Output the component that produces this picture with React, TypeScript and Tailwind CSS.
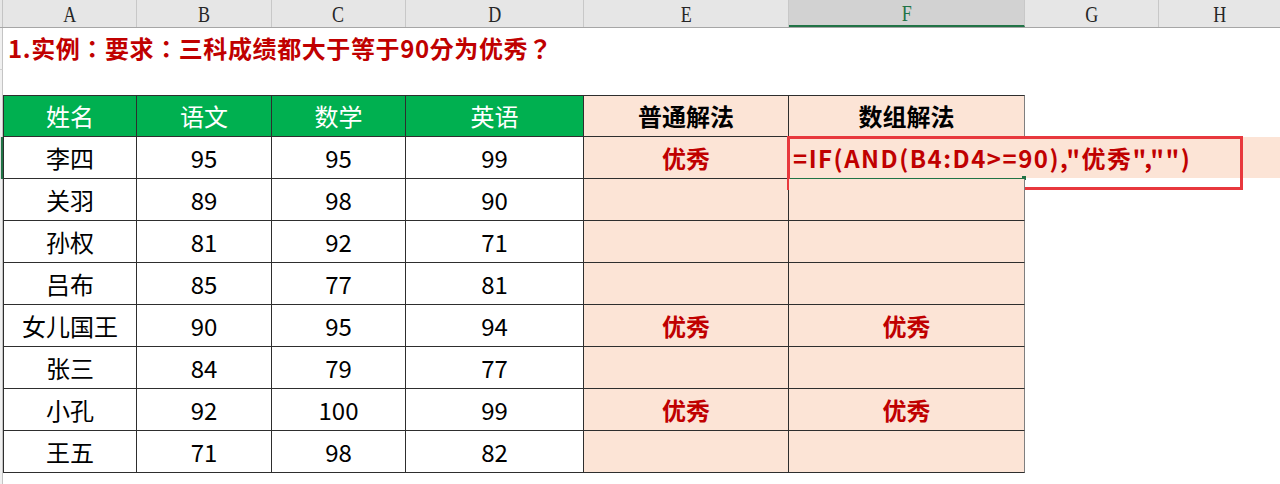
const rows = [
  ["李四", "95", "95", "99", "优秀", ""],
  ["关羽", "89", "98", "90", "", ""],
  ["孙权", "81", "92", "71", "", ""],
  ["吕布", "85", "77", "81", "", ""],
  ["女儿国王", "90", "95", "94", "优秀", "优秀"],
  ["张三", "84", "79", "77", "", ""],
  ["小孔", "92", "100", "99", "优秀", "优秀"],
  ["王五", "71", "98", "82", "", ""],
];

const widths = ["w-[134px]", "w-[135px]", "w-[134px]", "w-[178px]", "w-[205px]", "w-[236px]"];

function Strip({ active = false, className = "" }: { active?: boolean; className?: string }) {
  return (
    <div
      className={
        "w-[3px] shrink-0 self-stretch " +
        (active ? "border-r-2 border-[#217346] bg-[#e1e1e1]" : "border-r border-[#c4c4c4] bg-[#f0f0f0]") +
        " " +
        className
      }
    />
  );
}

function ColumnBar() {
  const letters = ["A", "B", "C", "D", "E", "F", "G"];
  return (
    <div className="flex h-[28px] border-b border-[#a6a6a6] bg-[#e6e6e6] font-['Liberation_Serif',serif] text-[24px] leading-none text-[#262626]">
      <div className="w-[3px] shrink-0 border-r border-[#c4c4c4]" />
      {letters.map((l, i) => (
        <div
          key={l}
          className={
            (i < 6 ? widths[i] : "w-[134px]") +
            " flex shrink-0 items-center justify-center border-r border-[#c8c8c8] " +
            (l === "F" ? "border-b-2 border-b-[#217346] bg-[#d2d2d2] text-[#217346]" : "")
          }
        >
          <span className="inline-block scale-x-[0.75]">{l}</span>
        </div>
      ))}
      <div className="flex flex-1 items-center justify-center">
        <span className="inline-block scale-x-[0.75]">H</span>
      </div>
    </div>
  );
}

export default function App() {
  return (
    <div className="h-[484px] w-[1280px] overflow-hidden bg-white font-['Noto_Sans_CJK_SC','Noto_Sans',sans-serif]">
      <ColumnBar />

      <div className="flex h-[42px]">
        <Strip className="border-b border-b-[#d0d0d0]" />
        <div className="flex items-center pl-[5px] pb-[2px] font-['Noto_Sans_CJK_TC','Noto_Sans_CJK_SC',sans-serif] text-[24px] font-bold tracking-[0.6px] text-[#c00000]">
          1.实例：要求：三科成绩都大于等于90分为优秀？
        </div>
      </div>
      <div className="flex h-[25px]">
        <Strip />
      </div>

      <div className="flex h-[42px]">
        <Strip />
        {["姓名", "语文", "数学", "英语"].map((h, i) => (
          <div
            key={h}
            className={
              widths[i] +
              " flex shrink-0 items-center justify-center border-t border-r border-b border-[#2e2e2e] bg-[#00b050] text-[24px] text-white " +
              (i === 0 ? "border-l" : "")
            }
          >
            {h}
          </div>
        ))}
        {["普通解法", "数组解法"].map((h, i) => (
          <div
            key={h}
            className={
              widths[i + 4] +
              " flex shrink-0 items-center justify-center border-t border-r border-b border-[#2e2e2e] bg-[#fce4d6] text-[24px] font-bold text-black " +
              (i === 1 ? "border-r-[#7f7f7f]" : "")
            }
          >
            {h}
          </div>
        ))}
      </div>

      {rows.map((r, ri) => (
        <div key={r[0]} className="flex h-[42px]">
          <Strip active={ri === 0} />
          {r.slice(0, 4).map((v, ci) => (
            <div
              key={ci}
              className={
                widths[ci] +
                " flex shrink-0 items-center justify-center border-r border-b border-[#2e2e2e] text-[24px] text-black " +
                (ci === 0 ? "border-l" : "")
              }
            >
              {v}
            </div>
          ))}
          <div className={widths[4] + " flex shrink-0 items-center justify-center border-r border-b border-[#2e2e2e] bg-[#fce4d6] text-[24px] font-bold text-[#c00000]"}>
            {r[4]}
          </div>
          <div className={widths[5] + " relative flex shrink-0 items-center justify-center border-r border-b border-[#2e2e2e] border-r-[#7f7f7f] bg-[#fce4d6] text-[24px] font-bold text-[#c00000]"}>
            {ri === 0 ? (
              <>
                <div className="absolute top-0 left-0 flex h-[41px] w-[492px] items-center bg-[#fce4d6] pl-[4px] tracking-[1.5px] whitespace-nowrap">
                  =IF(AND(B4:D4&gt;=90),"优秀","")
                </div>
                <div className="absolute top-[41px] left-0 h-[1px] w-[235px] bg-[#217346]" />
                <div className="absolute top-[39px] left-[233px] h-[4px] w-[4px] bg-[#217346]" />
                <div className="absolute -top-[1px] -left-[2px] h-[54px] w-[456px] border-[3px] border-[#e8383d]" />
              </>
            ) : (
              r[5]
            )}
          </div>
        </div>
      ))}
      <div className="flex h-[12px]">
        <Strip />
      </div>
    </div>
  );
}
